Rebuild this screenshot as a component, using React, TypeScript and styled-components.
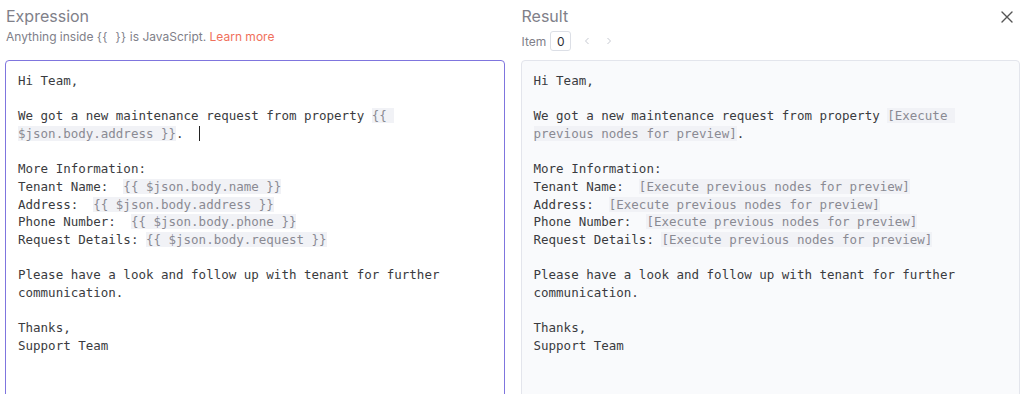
import { ReactNode } from 'react';
import styled, { createGlobalStyle } from 'styled-components';

const GlobalStyle = createGlobalStyle`
  html, body {
    margin: 0;
    padding: 0;
    overflow: hidden;
    background: #ffffff;
  }
  body {
    font-family: Inter, 'Noto Sans', sans-serif;
  }
`;

const placeholder = '[Execute previous nodes for preview]';

function Expr({ children }: { children: ReactNode }) {
  return <Resolvable>{children}</Resolvable>;
}

export default function App() {
  return (
    <>
      <GlobalStyle />
      <Page>
        <Column>
          <Header>
            <TitleRow>
              <Title>Expression</Title>
            </TitleRow>
            <Hint>
              Anything inside <Braces>{'{{  }}'}</Braces> is JavaScript.{' '}
              <LearnMore href='#'>Learn more</LearnMore>
            </Hint>
          </Header>
          <EditorBox $focused>
            <Code>
              {'Hi Team,\n\nWe got a new maintenance request from property '}
              <Expr>{'{{ $json.body.address }}'}</Expr>
              {'.  '}
              <Caret />
              {'\n\nMore Information:\nTenant Name:  '}
              <Expr>{'{{ $json.body.name }}'}</Expr>
              {'\nAddress:  '}
              <Expr>{'{{ $json.body.address }}'}</Expr>
              {'\nPhone Number:  '}
              <Expr>{'{{ $json.body.phone }}'}</Expr>
              {'\nRequest Details: '}
              <Expr>{'{{ $json.body.request }}'}</Expr>
              {'\n\nPlease have a look and follow up with tenant for further communication.\n\nThanks,\nSupport Team'}
            </Code>
          </EditorBox>
        </Column>

        <Column>
          <Header>
            <TitleRow>
              <Title>Result</Title>
              <CloseButton aria-label='Close'>
                <svg width='12' height='12' viewBox='0 0 12 12' fill='none'>
                  <path d='M1 1L11 11M11 1L1 11' stroke='#555' strokeWidth='1.4' strokeLinecap='round' />
                </svg>
              </CloseButton>
            </TitleRow>
            <ItemRow>
              <span>Item</span>
              <ItemIndex>0</ItemIndex>
              <Chevron>
                <svg width='6' height='8' viewBox='0 0 6 8' fill='none'>
                  <path d='M4.5 1L1.5 4L4.5 7' stroke='#c6c9d1' strokeWidth='1' />
                </svg>
              </Chevron>
              <Chevron>
                <svg width='6' height='8' viewBox='0 0 6 8' fill='none'>
                  <path d='M1.5 1L4.5 4L1.5 7' stroke='#c6c9d1' strokeWidth='1' />
                </svg>
              </Chevron>
            </ItemRow>
          </Header>
          <EditorBox>
            <Code>
              {'Hi Team,\n\nWe got a new maintenance request from property '}
              <Expr>{placeholder}</Expr>
              {'.\n\nMore Information:\nTenant Name:  '}
              <Expr>{placeholder}</Expr>
              {'\nAddress:  '}
              <Expr>{placeholder}</Expr>
              {'\nPhone Number:  '}
              <Expr>{placeholder}</Expr>
              {'\nRequest Details: '}
              <Expr>{placeholder}</Expr>
              {'\n\nPlease have a look and follow up with tenant for further communication.\n\nThanks,\nSupport Team'}
            </Code>
          </EditorBox>
        </Column>
      </Page>
    </>
  );
}

const Page = styled.div`
  display: flex;
  gap: 16px;
  padding: 0 4px 0 5px;
`;

const Column = styled.div`
  flex: 1;
  min-width: 0;
  display: flex;
  flex-direction: column;
`;

const Header = styled.div`
  height: 60px;
  padding-top: 4px;
  box-sizing: border-box;
  padding-left: 1px;
`;

const TitleRow = styled.div`
  display: flex;
  align-items: center;
  justify-content: space-between;
  height: 24px;
`;

const Title = styled.div`
  font-size: 16px;
  line-height: 24px;
  color: #808089;
  font-weight: 400;
`;

const Hint = styled.div`
  font-size: 12px;
  line-height: 18px;
  color: #808089;
`;

const Braces = styled.span`
  white-space: pre;
  letter-spacing: 0.4px;
`;

const LearnMore = styled.a`
  color: #f0705b;
  text-decoration: none;
`;

const CloseButton = styled.button`
  display: flex;
  align-items: center;
  justify-content: center;
  width: 20px;
  height: 20px;
  margin-right: 3px;
  margin-top: 2px;
  padding: 0;
  border: none;
  background: transparent;
  cursor: pointer;
`;

const ItemRow = styled.div`
  display: flex;
  align-items: center;
  gap: 4px;
  margin-top: 3px;
  height: 20px;
  font-size: 12px;
  color: #808089;
`;

const ItemIndex = styled.div`
  width: 19px;
  height: 18px;
  display: flex;
  align-items: center;
  justify-content: center;
  border: 1px solid #dcdfe6;
  border-radius: 3px;
  font-size: 12px;
  color: #2d2e33;
  margin-right: 3px;
`;

const Chevron = styled.span`
  display: flex;
  align-items: center;
  justify-content: center;
  width: 18px;
  height: 20px;
`;

const EditorBox = styled.div<{ $focused?: boolean }>`
  height: 360px;
  box-sizing: border-box;
  border: 1px solid ${({ $focused }) => ($focused ? '#7f75de' : '#e3e5ec')};
  border-radius: 4px;
  background: ${({ $focused }) => ($focused ? '#ffffff' : '#f9fafc')};
  padding: 11px 12px;
`;

const Code = styled.div`
  font-family: 'DejaVu Sans Mono', 'Liberation Mono', monospace;
  font-size: 12.5px;
  line-height: 17.67px;
  color: #3a3b40;
  white-space: pre-wrap;
  word-break: normal;
  overflow-wrap: break-word;
`;

const Resolvable = styled.span`
  background: #f1f2f6;
  color: #8a8a93;
`;

const Caret = styled.span`
  display: inline-block;
  width: 0;
  height: 15px;
  border-left: 1px solid #222;
  vertical-align: -3px;
`;
